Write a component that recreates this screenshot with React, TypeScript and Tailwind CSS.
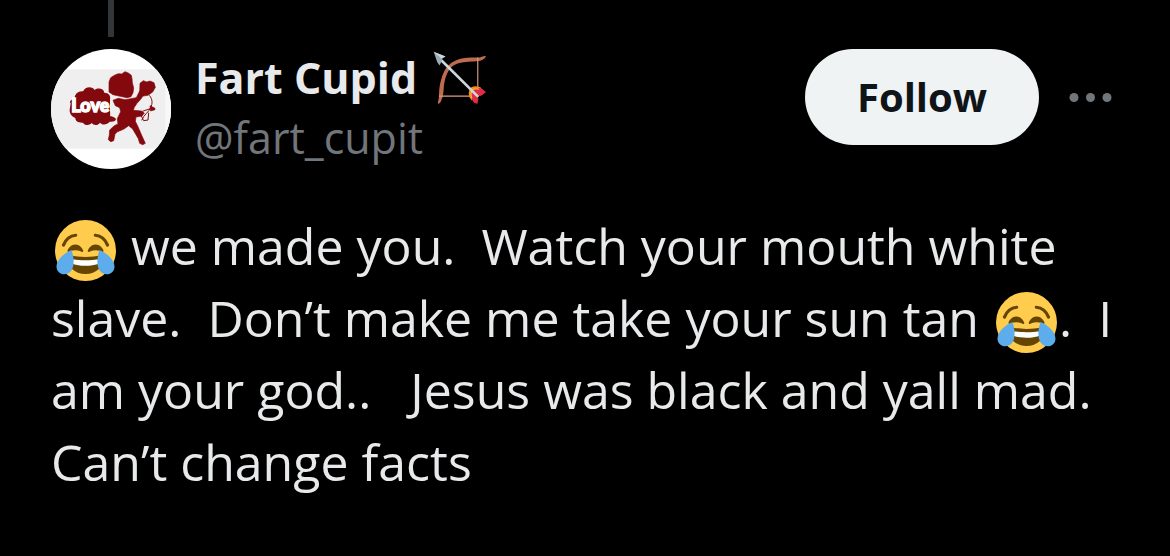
import React from "react";

function JoyEmoji() {
  return (
    <svg viewBox="0 0 36 36" role="img" aria-label="😂" className="mr-[2px] ml-1 inline-block size-[61px] align-[-16px]">
      <circle cx="18" cy="18" r="18" fill="#FFCC4D" />
      <g fill="none" stroke="#664500" strokeWidth="1.9" strokeLinecap="round">
        <path d="M5 14.8C6.3 11.6 9 9.3 12.2 9" />
        <path d="M31 14.8C29.7 11.6 27 9.3 23.8 9" />
      </g>
      <path
        fill="#664500"
        d="M16.6 17.9c-.1-.2-1.5-3.4-4.6-3.4s-4.5 3.2-4.6 3.4c-.2.7.4 1.200 1 .8 0 0 1.300-.9 3.600-.9s3.600.9 3.600.9c.7.4 1.300-.1 1-.8zM28.600 17.900c-.1-.2-1.500-3.400-4.600-3.400s-4.500 3.200-4.600 3.400c-.3.7.3 1.200 1 .8 0 0 1.300-.9 3.600-.9s3.600.9 3.600.9c.6.4 1.200-.1 1-.8z"
      />
      <path fill="#664500" d="M18 21.800c-3.600 0-6-.4-9-1-.7-.1-2 0-2 2 0 4 4.600 9.100 11 9.100s11-5.100 11-9.100c0-2-1.300-2.100-2-2-3 .6-5.400 1-9 1z" />
      <path fill="#fff" d="M9 22.800s3 .9 9 .9 9-.9 9-.9v2.400S24.500 27 18 27s-9-1.800-9-1.800z" />
      <path fill="#5DADEC" d="M9.800 17.700c1 3.600 1.600 6.300.9 9.600-.7 3-2.700 4.700-5.200 4.700-2.700 0-4.600-1.900-4.600-4.600 0-3.900 4.600-8 8.900-9.700z" />
      <path fill="#5DADEC" d="M26.200 17.700c-1 3.600-1.600 6.300-.9 9.600.7 3 2.700 4.700 5.200 4.700 2.700 0 4.600-1.900 4.600-4.600 0-3.900-4.600-8-8.900-9.700z" />
    </svg>
  );
}

function BowEmoji() {
  return (
    <svg viewBox="22 18 164 164" role="img" aria-label="🏹" className="inline-block size-[54px] shrink-0">
      <path fill="#BE6B50" d="M38 178c-3 0 1-10 2-20 1-16 0-31 8-57 7-23 17-41 37-51 20-11 45-12 72-12 12 0 17-6 25-5 2 1-3 9-12 13-12 5-35 3-55 6-23 3-36 10-45 25-9 14-13 30-15 48-1 18-2 32-8 43-2 5-5 10-9 10z" />
      <path fill="none" stroke="#D99E82" strokeWidth="3.500" d="M40 155h98M158 38v92" />
      <path fill="#F4900C" d="M167 129c-16-7-31-4-35 9-3 12-1 22 8 30l8-10-4-17 20 2 4-12z" />
      <path fill="#DD2E44" d="M183 143l-13-11c-13-3-23-1-30 8-5 9-4 22 8 36l9 2 3-16-4-6 12-2z" />
      <path fill="none" stroke="#FFCC4D" strokeWidth="3" d="M162 134c-19-5-29 6-22 27" />
      <path fill="none" stroke="#CCD6DD" strokeWidth="8" d="M48 47l109 108" strokeLinecap="round" />
      <path fill="#9AAAB4" d="M24 20l36 15-10 6-2 8-6 13-7-10z" />
      <path fill="#CCD6DD" d="M24 20l36 15-12 6z" />
    </svg>
  );
}

function Avatar() {
  return (
    <a href="#profile" aria-label="Fart Cupid profile" className="size-[120px] shrink-0 overflow-hidden rounded-full bg-white">
      <svg viewBox="33 147 360 360" className="size-full">
        <rect x="33" y="208" width="360" height="238" fill="#EFEFEF" />
        <rect x="376" y="208" width="17" height="238" fill="#F8F8F8" />
        <g fill="#84090F">
          <path d="M92 310c-5-5 0-12 12-14-1-14 12-24 25-22 6-15 28-17 35-4 10-8 27-5 29 8 13 0 20 10 17 20v36c1 7 1 10 0 14 9 2 16 4 18 10-3 8-12 8-19 7-8 9-20 12-29 3-6 9-19 9-25 1-9 9-21 7-26-1-14 1-23-5-23-14-12-5-18-16-17-25z" />
          <g transform="translate(195 204)" stroke="#84090F" strokeWidth="2" strokeLinejoin="round">
            <path d="M12 72v-30l5-13 13-8 10-4 10 1 10-7 10 4 9 7 2 10 1 12 4 16-2 14-6 12-12 3-20-4-22-5z" />
            <path d="M24 97l16-6 20 4 18-3 16-3 10-20 12 12-9 13-11 12-8 12-3 9 24 2 9 6-7 9-18 3-2 13 7 14 12 28 11 24-8 4-9-4-4-14-17-29-12-10-14 10-21 9-6 7-4 19-9 3-7-6 3-14 1-15 14-13 11-5-2-16 10-21-3-12-13-6z" />
            <path d="M105 46l10-8 10 4 10-3 12 5 4 14-8 14-14 10-14 2-11-9z" />
            <path d="M135 113l15 8v4l-13 4z" />
          </g>
        </g>
        <g fill="none" stroke="#84090F" strokeWidth="3" transform="translate(195 204)">
          <path d="M133 82c10 12 10 24 4 37-5 13-20 20-27 38M108 142l8 16 13-2 2-22" />
          <path d="M112 130l30-10" />
        </g>
        <text x="151" y="335" textAnchor="middle" fontSize="54" fill="#fff" stroke="#fff" strokeWidth="4" className="font-['Lato'] font-black">
          Love
        </text>
      </svg>
    </a>
  );
}

const lines = [
  [<JoyEmoji key="joy" />, " we made you.  Watch your mouth white"],
  ["slave.  Don’t make me take your sun tan ", <JoyEmoji key="joy" />, ".  I"],
  ["am your god..   Jesus was black and yall mad."],
  ["Can’t change facts"],
];

export default function App() {
  return (
    <main className="min-h-screen bg-black font-['Open_Sans',sans-serif] text-[#e7e9ea]">
      <article className="pr-10 pb-12 pl-[51px]">
        <div className="mb-3 flex h-[37px] w-[120px] justify-center">
          <div className="w-[6px] bg-[#333639]" />
        </div>
        <header className="flex items-start pr-[18px]">
          <Avatar />
          <div className="ml-6 min-w-0 grow">
            <h1 className="flex h-[58px] items-center gap-4 text-[43px] font-bold whitespace-nowrap">
              Fart Cupid
              <BowEmoji />
            </h1>
            <p className="text-[43px] leading-[62px] text-[#71767b]">@fart_cupit</p>
          </div>
          <button type="button" className="h-24 w-[234px] shrink-0 rounded-full bg-[#eff3f4] text-[40px] font-bold text-[#0f1419]">
            Follow
          </button>
          <button type="button" aria-label="More" className="ml-[30px] flex h-24 shrink-0 items-center">
            <svg viewBox="0 0 43 10" className="h-[10px] w-[43px]" fill="#71767b">
              <circle cx="5" cy="5.500" r="4.500" />
              <circle cx="21.500" cy="5.500" r="4.500" />
              <circle cx="38" cy="5.500" r="4.500" />
            </svg>
          </button>
        </header>
        <p className="mt-[41px] text-[50px] leading-[72px] whitespace-pre-wrap">
          {lines.map((line, i) => (
            <span key={i} className="block">
              {line}
            </span>
          ))}
        </p>
      </article>
    </main>
  );
}
